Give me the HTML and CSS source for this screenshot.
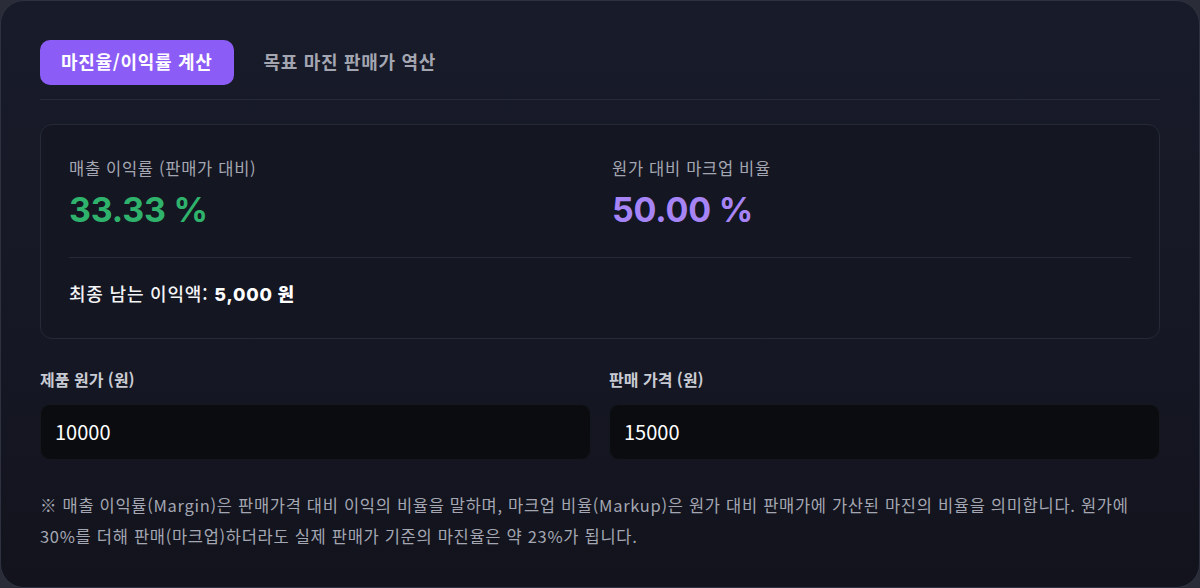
FILE: index.html
```html
<!DOCTYPE html>
<html lang="ko">
<head>
    <meta charset="UTF-8">
    <meta name="viewport" content="width=device-width, initial-scale=1.0">
    <title>마진율 계산기</title>
    <link rel="stylesheet" href="styles.css">
</head>
<body>
    <div class="calc-card">
        <div class="tabs">
            <button class="tab active">마진율/이익률 계산</button>
            <button class="tab">목표 마진 판매가 역산</button>
        </div>

        <div class="result-box">
            <div class="result-grid">
                <div class="result-item">
                    <p class="result-label">매출 이익률 (판매가 대비)</p>
                    <p class="result-value green">33.33 %</p>
                </div>
                <div class="result-item">
                    <p class="result-label">원가 대비 마크업 비율</p>
                    <p class="result-value purple">50.00 %</p>
                </div>
            </div>
            <p class="profit">최종 남는 이익액: <strong>5,000 원</strong></p>
        </div>

        <div class="inputs">
            <div class="field">
                <label for="cost">제품 원가 (원)</label>
                <input type="number" id="cost" value="10000">
            </div>
            <div class="field">
                <label for="price">판매 가격 (원)</label>
                <input type="number" id="price" value="15000">
            </div>
        </div>

        <p class="note">※ 매출 이익률(Margin)은 판매가격 대비 이익의 비율을 말하며, 마크업 비율(Markup)은 원가 대비 판매가에 가산된 마진의 비율을 의미합니다. 원가에 30%를 더해 판매(마크업)하더라도 실제 판매가 기준의 마진율은 약 23%가 됩니다.</p>
    </div>
</body>
</html>
```

FILE: styles.css
```css
* {
    margin: 0;
    padding: 0;
    box-sizing: border-box;
}

body {
    font-family: 'Noto Sans CJK KR', sans-serif;
    background-color: #2a2d37;
    color: #e5e7eb;
    height: 588px;
    overflow: hidden;
}

.calc-card {
    height: 100%;
    padding: 39px 39px 0;
    border-radius: 24px;
    border: 1px solid #2e3240;
    background: linear-gradient(180deg, #181b29 0%, #151724 60%, #12131c 100%);
}

/* tabs */
.tabs {
    display: flex;
    align-items: center;
    gap: 10px;
    padding-bottom: 14px;
    border-bottom: 1px solid #262a38;
}

.tab {
    font-family: inherit;
    font-size: 18px;
    font-weight: 700;
    letter-spacing: 0.7px;
    line-height: 24px;
    padding: 0 20px 4px;
    height: 45px;
    border: none;
    border-radius: 10px;
    background: none;
    color: #a3a6b1;
    cursor: pointer;
}

.tab.active {
    background-color: #8b5cf6;
    color: #ffffff;
    padding: 0 21px 4px;
}

/* results */
.result-box {
    margin-top: 24px;
    padding: 29px 28px 0;
    height: 215px;
    border: 1px solid #262a38;
    border-radius: 12px;
    background-color: #141622;
}

.result-grid {
    display: grid;
    grid-template-columns: 1fr 1fr;
    column-gap: 24px;
    padding-bottom: 23px;
    border-bottom: 1px solid #262a38;
}

.result-label {
    font-size: 16.5px;
    letter-spacing: 0.7px;
    color: #a4a7b2;
    line-height: 28px;
}

.result-value {
    font-family: 'Inter', sans-serif;
    font-size: 34px;
    font-weight: 700;
    line-height: 48px;
    margin-top: 4px;
    letter-spacing: -0.2px;
}

.green {
    color: #2fb36c;
}

.purple {
    color: #a684f6;
}

.profit {
    margin-top: 22px;
    font-size: 18px;
    line-height: 26px;
    letter-spacing: 0.8px;
    font-weight: 500;
    color: #f3f4f6;
}

.profit strong {
    font-family: 'Inter', 'Noto Sans CJK KR', sans-serif;
    font-weight: 800;
    color: #ffffff;
}

/* inputs */
.inputs {
    display: grid;
    grid-template-columns: 1fr 1fr;
    gap: 18px;
    margin-top: 28px;
}

.field label {
    display: block;
    font-size: 16px;
    font-weight: 700;
    color: #c9cbd3;
    margin-bottom: 13px;
    line-height: 24px;
}

.field input {
    width: 100%;
    height: 56px;
    padding: 0 14px 2px;
    font-family: 'Noto Sans CJK KR', sans-serif;
    font-size: 20px;
    color: #ffffff;
    background-color: #0b0c10;
    border: 1px solid #15171f;
    border-radius: 10px;
    outline: none;
    -moz-appearance: textfield;
}

.field input::-webkit-inner-spin-button,
.field input::-webkit-outer-spin-button {
    -webkit-appearance: none;
}

.note {
    margin-top: 30px;
    font-size: 16.5px;
    letter-spacing: 0.7px;
    line-height: 31px;
    color: #a4a7b2;
}
```
